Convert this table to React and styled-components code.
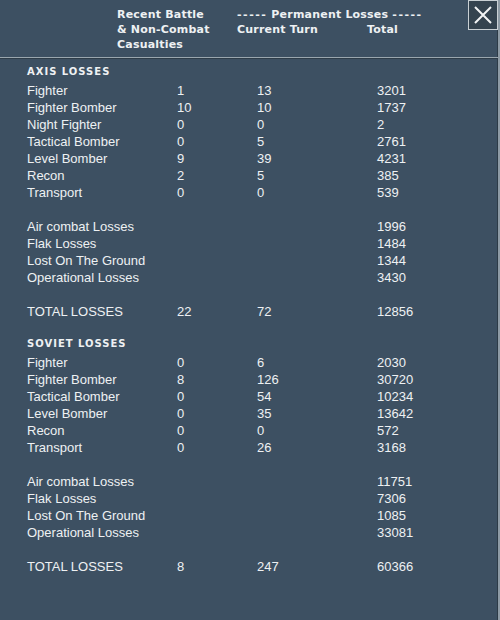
import React from 'react';
import styled, { createGlobalStyle } from 'styled-components';

const GlobalStyle = createGlobalStyle`
  html, body {
    margin: 0;
    padding: 0;
    background: #3d5062;
  }
`;

const Panel = styled.div`
  position: relative;
  width: 500px;
  height: 620px;
  box-sizing: border-box;
  background: #3d5062;
  color: #eef1f3;
  font-family: "Liberation Sans", Arial, sans-serif;
  border-right: 2px solid #8e9ba5;
  box-shadow: inset -1px 0 0 #2d3b47;
  overflow: hidden;
`;

const Header = styled.div`
  display: grid;
  grid-template-columns: 120px 130px auto;
  grid-auto-rows: 15px;
  align-content: start;
  padding: 7px 0 0 117px;
  height: 58px;
  box-sizing: border-box;
  border-bottom: 1px solid #9aa6ae;
  box-shadow: 0 1px 0 #2e3c48;
  font-family: "DejaVu Sans", Verdana, sans-serif;
  font-weight: bold;
  font-size: 11px;
  line-height: 15px;
  letter-spacing: 0.2px;
`;

const HeadCell = styled.div`
  grid-column: ${(p) => p.$col};
  white-space: nowrap;
`;

const Dashes = styled.span`
  letter-spacing: 1.5px;
`;

const CloseButton = styled.button`
  position: absolute;
  top: 0;
  right: 0;
  width: 30px;
  height: 30px;
  padding: 0;
  background: #34434f;
  border: 1px solid #c9d0d4;
  display: flex;
  align-items: center;
  justify-content: center;
  cursor: pointer;
`;

const Body = styled.div`
  padding: 6px 0 0 27px;
`;

const Row = styled.div`
  display: grid;
  grid-template-columns: 150px 80px 120px auto;
  height: 17px;
  line-height: 17px;
  font-size: 13px;
`;

const SectionTitle = styled.div`
  height: 18px;
  line-height: 16px;
  font-family: "DejaVu Sans", Verdana, sans-serif;
  font-weight: bold;
  font-size: 10px;
  letter-spacing: 1px;
`;

const Gap = styled.div`
  height: ${(p) => p.$h}px;
`;

const axisTypes = [
  ['Fighter', '1', '13', '3201'],
  ['Fighter Bomber', '10', '10', '1737'],
  ['Night Fighter', '0', '0', '2'],
  ['Tactical Bomber', '0', '5', '2761'],
  ['Level Bomber', '9', '39', '4231'],
  ['Recon', '2', '5', '385'],
  ['Transport', '0', '0', '539'],
];

const axisCauses = [
  ['Air combat Losses', '', '', '1996'],
  ['Flak Losses', '', '', '1484'],
  ['Lost On The Ground', '', '', '1344'],
  ['Operational Losses', '', '', '3430'],
];

const sovietTypes = [
  ['Fighter', '0', '6', '2030'],
  ['Fighter Bomber', '8', '126', '30720'],
  ['Tactical Bomber', '0', '54', '10234'],
  ['Level Bomber', '0', '35', '13642'],
  ['Recon', '0', '0', '572'],
  ['Transport', '0', '26', '3168'],
];

const sovietCauses = [
  ['Air combat Losses', '', '', '11751'],
  ['Flak Losses', '', '', '7306'],
  ['Lost On The Ground', '', '', '1085'],
  ['Operational Losses', '', '', '33081'],
];

const Rows = ({ data }) =>
  data.map((r) => (
    <Row key={r[0]}>
      <span>{r[0]}</span>
      <span>{r[1]}</span>
      <span>{r[2]}</span>
      <span>{r[3]}</span>
    </Row>
  ));

const Section = ({ title, types, causes, total }) => (
  <>
    <SectionTitle>{title}</SectionTitle>
    <Rows data={types} />
    <Gap $h={17} />
    <Rows data={causes} />
    <Gap $h={17} />
    <Rows data={[total]} />
    <Gap $h={16} />
  </>
);

export default function App() {
  return (
    <Panel>
      <GlobalStyle />
      <Header>
        <HeadCell $col="1">Recent Battle</HeadCell>
        <HeadCell $col="2 / 4">
          <Dashes>-----</Dashes> Permanent Losses <Dashes>-----</Dashes>
        </HeadCell>
        <HeadCell $col="1">&amp; Non-Combat</HeadCell>
        <HeadCell $col="2">Current Turn</HeadCell>
        <HeadCell $col="3">Total</HeadCell>
        <HeadCell $col="1">Casualties</HeadCell>
      </Header>
      <CloseButton aria-label="Close">
        <svg width="18" height="18" viewBox="0 0 18 18">
          <path d="M1 1 L17 17 M17 1 L1 17" stroke="#f2f4f5" strokeWidth="2" />
        </svg>
      </CloseButton>
      <Body>
        <Section
          title="AXIS LOSSES"
          types={axisTypes}
          causes={axisCauses}
          total={['TOTAL LOSSES', '22', '72', '12856']}
        />
        <Section
          title="SOVIET LOSSES"
          types={sovietTypes}
          causes={sovietCauses}
          total={['TOTAL LOSSES', '8', '247', '60366']}
        />
      </Body>
    </Panel>
  );
}
